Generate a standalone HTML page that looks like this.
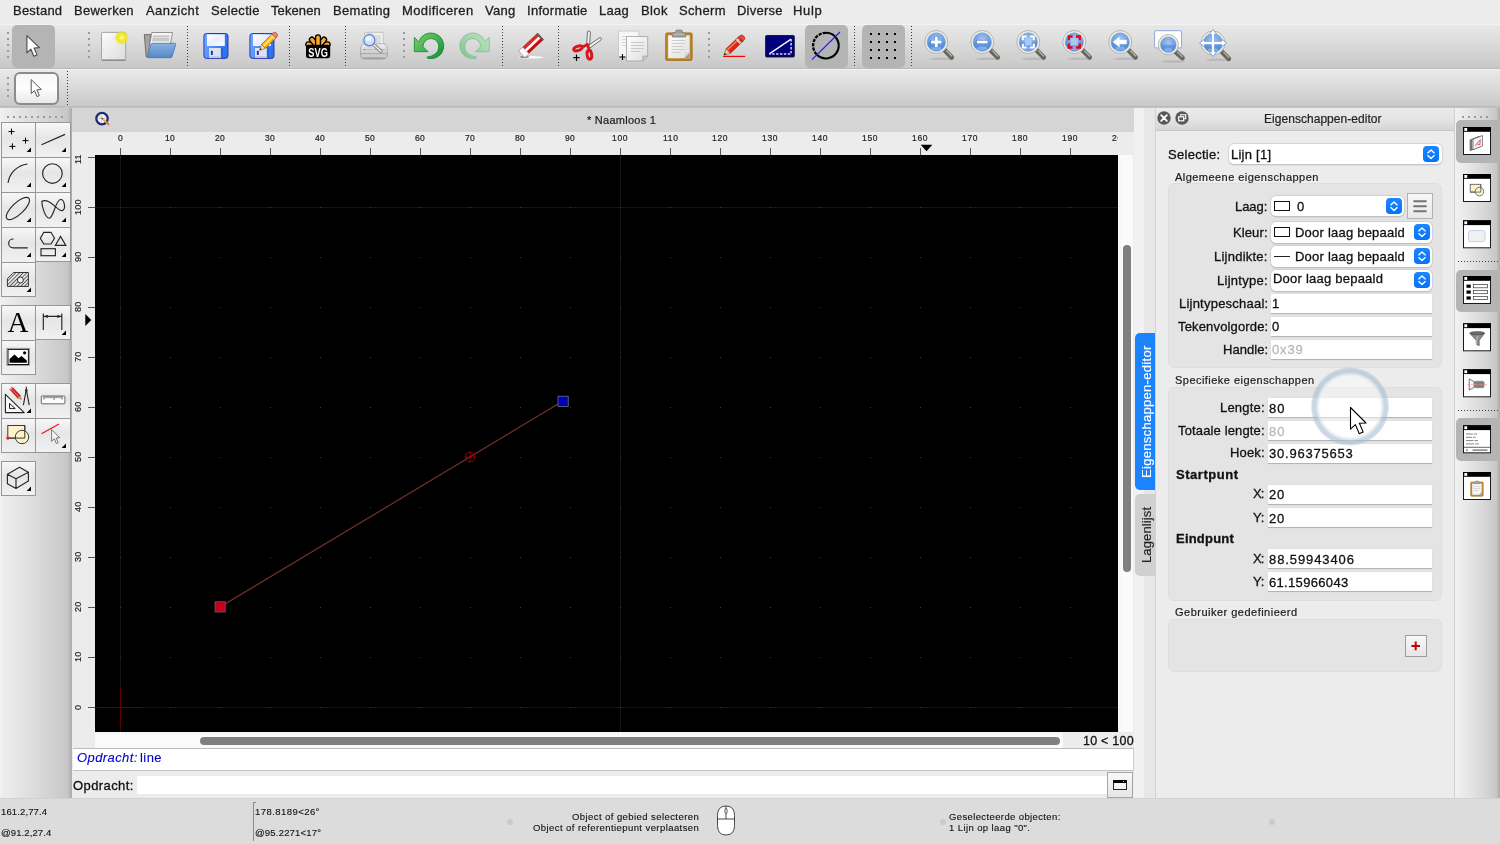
<!DOCTYPE html><html lang="nl"><head><meta charset="utf-8"><title>QCAD - Naamloos 1</title><style>
*{box-sizing:border-box;margin:0;padding:0}
html,body{width:1500px;height:844px;overflow:hidden}
body{position:relative;background:#ececec;font-family:"Liberation Sans",sans-serif;color:#1c1c1c}
.a{position:absolute}
.t{position:absolute;white-space:pre;will-change:transform;-webkit-text-stroke:0.3px}
.s{-webkit-text-stroke:0.12px}
.m{-webkit-text-stroke:0.2px}
svg{position:absolute;overflow:visible;will-change:transform}
#menubar{left:0;top:0;width:1500px;height:24px;background:#ececec}
#tb1{left:0;top:24px;width:1500px;height:45px;background:linear-gradient(#f3f3f3 0,#f3f3f3 1px,#e8e8e8 1px,#dfdfdf 14px,#c8c8c8 44px,#bbbbbb 44px)}
#tb2{left:0;top:69px;width:1500px;height:39px;background:linear-gradient(#f2f2f2 0,#f2f2f2 1px,#e9e9e9 1px,#e0e0e0 12px,#c9c9c9 37px,#bababa 37px,#bababa 38px,#c4c4c4 38px)}
.sel{background:#b4b4b4;border-radius:5px}
.hd{width:2px;height:2px;background:#9a9a9a}
.vsep{width:1px;background-image:linear-gradient(#3c3c3c 34%,transparent 34%);background-size:1px 3px}
.hsep{height:1px;background-image:linear-gradient(90deg,#3c3c3c 34%,transparent 34%);background-size:3px 1px}
#left{left:0;top:108px;width:72px;height:691px;background:linear-gradient(90deg,#f4f4f4 0,#eeeeee 2px,#dbdbdb 36px,#c7c7c7 68px,#b4b4b4 70px,#adadad 72px)}
.cb{width:34px;height:34px;border:1px solid #979797;background:linear-gradient(#f7f7f7,#e6e6e6 45%,#f1f1f1)}
#tabbar{left:72px;top:108px;width:1062px;height:24px;background:#d5d5d5}
#rtop{left:72px;top:132px;width:1062px;height:23px;background:#ececec}
#rleft{left:72px;top:155px;width:23px;height:593px;background:#ececec}
#canvas{left:95px;top:155px;width:1023px;height:577px;background:#000}
#vs{left:1118px;top:155px;width:15px;height:577px;background:linear-gradient(90deg,#f4f4f4,#fbfbfb 30%,#fafafa)}
#hs{left:95px;top:732px;width:968px;height:16px;background:linear-gradient(#f4f4f4,#fbfbfb 30%,#fafafa)}
.thumb{background:#7f7f7f;border-radius:4px}
#hist{left:73px;top:748px;width:1061px;height:23px;background:#fff;border-top:1px solid #bdbdbd;border-bottom:1px solid #c2c2c2;border-right:1px solid #cdcdcd}
#cmdin{left:137px;top:776px;width:970px;height:18px;background:#fff}
#status{left:0;top:798px;width:1500px;height:46px;background:#dcdcdc;border-top:1px solid #d2d2d2}
#tabcol{left:1134px;top:108px;width:21px;height:690px;background:linear-gradient(90deg,#f1f1f1 0,#f1f1f1 10px,#e7e7e7 10px)}
#dock{left:1155px;top:108px;width:300px;height:690px;background:#ececec;border-left:1px solid #d2d2d2;border-right:1px solid #cfcfcf}
#docktitle{left:1156px;top:108px;width:298px;height:23px;background:linear-gradient(#ebebeb,#e4e4e4 50%,#d6d6d6);border-bottom:1px solid #c6c6c6}
#rtb{left:1455px;top:108px;width:45px;height:690px;background:linear-gradient(90deg,#f1f1f1 0,#e7e7e7 13px,#d5d5d5 31px,#c6c6c6 42px,#b3b3b3 43px,#afafaf 45px)}
.gb{background:#e4e4e4;border:1px solid #dedede;border-radius:6px}
.combo{background:#fff;border-radius:5px;height:20.5px;box-shadow:0 0 0 0.5px #c3cbd6,0 0.5px 1.5px rgba(0,0,0,.25)}
.cbtn{width:16px;height:16px;border-radius:4px;background:linear-gradient(#1a86ff,#0773f5)}
.inp{background:#fff;height:19px;border-bottom:1px solid #b4b4b4;box-shadow:0 0 0 0.5px #dcdcdc}
.pbtn{border:1px solid #a6a6a6;background:linear-gradient(#f8f8f8,#e6e6e6)}
.dot{width:6px;height:6px;border-radius:3px;background:#cbcbcb}
</style></head><body>
<div id="menubar" class="a">
<span class="t" style="left:13.40px;top:2.00px;font-size:13px;line-height:18px;color:#1e1e1e;letter-spacing:0.233px;">Bestand</span>
<span class="t" style="left:74.40px;top:2.00px;font-size:13px;line-height:18px;color:#1e1e1e;letter-spacing:0.256px;">Bewerken</span>
<span class="t" style="left:145.90px;top:2.00px;font-size:13px;line-height:18px;color:#1e1e1e;letter-spacing:0.434px;">Aanzicht</span>
<span class="t" style="left:210.70px;top:2.00px;font-size:13px;line-height:18px;color:#1e1e1e;letter-spacing:0.322px;">Selectie</span>
<span class="t" style="left:271.10px;top:2.00px;font-size:13px;line-height:18px;color:#1e1e1e;letter-spacing:0.092px;">Tekenen</span>
<span class="t" style="left:332.70px;top:2.00px;font-size:13px;line-height:18px;color:#1e1e1e;letter-spacing:0.312px;">Bemating</span>
<span class="t" style="left:401.80px;top:2.00px;font-size:13px;line-height:18px;color:#1e1e1e;letter-spacing:0.391px;">Modificeren</span>
<span class="t" style="left:484.70px;top:2.00px;font-size:13px;line-height:18px;color:#1e1e1e;letter-spacing:0.269px;">Vang</span>
<span class="t" style="left:526.60px;top:2.00px;font-size:13px;line-height:18px;color:#1e1e1e;letter-spacing:0.278px;">Informatie</span>
<span class="t" style="left:598.70px;top:2.00px;font-size:13px;line-height:18px;color:#1e1e1e;letter-spacing:0.294px;">Laag</span>
<span class="t" style="left:640.70px;top:2.00px;font-size:13px;line-height:18px;color:#1e1e1e;letter-spacing:0.404px;">Blok</span>
<span class="t" style="left:678.70px;top:2.00px;font-size:13px;line-height:18px;color:#1e1e1e;letter-spacing:0.343px;">Scherm</span>
<span class="t" style="left:736.70px;top:2.00px;font-size:13px;line-height:18px;color:#1e1e1e;letter-spacing:0.223px;">Diverse</span>
<span class="t" style="left:793.40px;top:2.00px;font-size:13px;line-height:18px;color:#1e1e1e;letter-spacing:0.655px;">Hulp</span>
</div>
<div id="tb1" class="a"></div><div id="tb2" class="a"></div>
<div class="a sel" style="left:12px;top:25px;width:43px;height:43px"></div>
<div class="a sel" style="left:805px;top:25px;width:43px;height:43px"></div>
<div class="a sel" style="left:862px;top:25px;width:43px;height:43px"></div>
<div class="a hd" style="left:7px;top:32px"></div>
<div class="a hd" style="left:7px;top:38px"></div>
<div class="a hd" style="left:7px;top:44px"></div>
<div class="a hd" style="left:7px;top:50px"></div>
<div class="a hd" style="left:7px;top:56px"></div>
<div class="a hd" style="left:88px;top:32px"></div>
<div class="a hd" style="left:88px;top:38px"></div>
<div class="a hd" style="left:88px;top:44px"></div>
<div class="a hd" style="left:88px;top:50px"></div>
<div class="a hd" style="left:88px;top:56px"></div>
<div class="a hd" style="left:403px;top:32px"></div>
<div class="a hd" style="left:403px;top:38px"></div>
<div class="a hd" style="left:403px;top:44px"></div>
<div class="a hd" style="left:403px;top:50px"></div>
<div class="a hd" style="left:403px;top:56px"></div>
<div class="a hd" style="left:708px;top:32px"></div>
<div class="a hd" style="left:708px;top:38px"></div>
<div class="a hd" style="left:708px;top:44px"></div>
<div class="a hd" style="left:708px;top:50px"></div>
<div class="a hd" style="left:708px;top:56px"></div>
<div class="a vsep" style="left:187px;top:26px;height:40px"></div>
<div class="a vsep" style="left:289px;top:26px;height:40px"></div>
<div class="a vsep" style="left:345px;top:26px;height:40px"></div>
<div class="a vsep" style="left:502px;top:26px;height:40px"></div>
<div class="a vsep" style="left:558px;top:26px;height:40px"></div>
<div class="a vsep" style="left:854px;top:26px;height:40px"></div>
<div class="a vsep" style="left:911px;top:26px;height:40px"></div>
<div class="a hd" style="left:7px;top:77px"></div>
<div class="a hd" style="left:7px;top:83px"></div>
<div class="a hd" style="left:7px;top:89px"></div>
<div class="a hd" style="left:7px;top:95px"></div>
<div class="a vsep" style="left:67px;top:71px;height:34px"></div>
<div class="a" style="left:14px;top:72px;width:45px;height:33px;border:2px solid #8c8c8c;border-radius:6px;background:linear-gradient(#f6f6f6,#fdfdfd 50%,#e9e9e9)"></div>
<svg style="left:0;top:24px" width="1500" height="84" viewBox="0 24 1500 84"><defs>
<linearGradient id="gPage" x1="0" y1="0" x2="1" y2="1"><stop offset="0" stop-color="#fdfdfd"/><stop offset="1" stop-color="#dcdcdc"/></linearGradient>
<radialGradient id="gGlow"><stop offset="0" stop-color="#fffde0"/><stop offset=".3" stop-color="#f6f02a"/><stop offset=".72" stop-color="#eee41c" stop-opacity=".85"/><stop offset="1" stop-color="#e8dc20" stop-opacity="0"/></radialGradient>
<linearGradient id="gFold" x1="0" y1="0" x2="0" y2="1"><stop offset="0" stop-color="#8cb2de"/><stop offset="1" stop-color="#5588c8"/></linearGradient>
<linearGradient id="gFlop" x1="0" y1="0" x2="1" y2=".25"><stop offset="0" stop-color="#74acff"/><stop offset=".5" stop-color="#4a8cf8"/><stop offset="1" stop-color="#2c74ee"/></linearGradient>
<linearGradient id="gLabel" x1="0" y1="0" x2="1" y2="1"><stop offset="0" stop-color="#ffffff"/><stop offset=".5" stop-color="#eeeefc"/><stop offset="1" stop-color="#fbfbff"/></linearGradient>
<linearGradient id="gGreen" x1="0" y1="0" x2="1" y2="1"><stop offset="0" stop-color="#86cc6a"/><stop offset=".55" stop-color="#3fae52"/><stop offset="1" stop-color="#128a30"/></linearGradient>
<linearGradient id="gGreenL" x1="0" y1="0" x2="1" y2="1"><stop offset="0" stop-color="#bfe2bf"/><stop offset=".55" stop-color="#9fd3aa"/><stop offset="1" stop-color="#7cc08c"/></linearGradient>
<radialGradient id="gLens" cx=".5" cy=".35" r=".7"><stop offset="0" stop-color="#a9c6ee"/><stop offset=".6" stop-color="#6b9fe2"/><stop offset="1" stop-color="#4d86d4"/></radialGradient>
<linearGradient id="gPrint" x1="0" y1="0" x2="0" y2="1"><stop offset="0" stop-color="#f2f2f2"/><stop offset="1" stop-color="#bdbdbd"/></linearGradient>
<linearGradient id="gClip" x1="0" y1="0" x2="1" y2="1"><stop offset="0" stop-color="#ffffff"/><stop offset="1" stop-color="#dedede"/></linearGradient>
</defs><path d="M26.9 35.6V52.9L30.9 49.2L33.9 56.2L37 54.9L34.1 48L39.4 47.6Z" fill="#fff" stroke="#4a4a4a" stroke-width="1.1" stroke-linejoin="round"/><path d="M31.2 79.6V93.6L34.5 90.6L37 96.6L39.3 95.6L36.9 89.8L41.3 89.5Z" fill="#fff" stroke="#555" stroke-width="1" stroke-linejoin="round"/><rect x="101.500" y="32.400" width="24.200" height="27.500" rx="1.300" fill="url(#gPage)" stroke="#9c9c9c" stroke-width=".9"/><path d="M101.600 60.300h24" stroke="#7c7c7c" stroke-width="1.200" opacity=".8"/><path d="M103.400 42.200h1M103.400 49.600h1" stroke="#c4c4c4"/><circle cx="121.700" cy="37.700" r="7.200" fill="url(#gGlow)"/><path d="M144.300 34.600h6.400l-2.300 22h-2.300z" fill="#a4a4a4" stroke="#5a5a5a" stroke-width=".8" stroke-linejoin="round"/><path d="M151.800 32.500h20.800l-2.400 12-21.600 10.500-.8-.3z" fill="#f6f6f6" stroke="#7a7a7a" stroke-width=".8" stroke-linejoin="round"/><path d="M153.200 35.200h16.600l-.9 6.400h-17z" fill="#c9c9c9"/><path d="M153.600 37.400h15.800" stroke="#e4e4e4" stroke-width=".9"/><path d="M152.400 43.300h22.400q1.200 0 .9 1.200l-3.600 12q-.4 1.200-1.600 1.200h-22.400q-1.200 0-.8-1.200l3.500-12q.4-1.200 1.600-1.200z" fill="url(#gFold)" stroke="#3f74b6" stroke-width=".8"/><g transform="translate(203.4 33)"><rect x=".5" y=".5" width="24.100" height="24.900" rx="2.600" fill="url(#gFlop)" stroke="#2a2ab0" stroke-width=".9"/><rect x="3.600" y="1.300" width="17.800" height="11.700" fill="url(#gLabel)"/><rect x="17.400" y="15" width="2.200" height="9.900" fill="#1e5ee6" opacity=".8"/><rect x="5.600" y="15" width="11.800" height="10" fill="#dfe1ec"/><rect x="5.600" y="23.200" width="11.800" height="1.800" fill="#c4c6d8"/><rect x="7.500" y="17.700" width="1.900" height="4.300" rx=".6" fill="#0a32dc"/><rect x="22" y="3" width="1" height="1" fill="#2a4ab0"/></g><g transform="translate(249.4 33)"><rect x=".5" y=".5" width="24.100" height="24.900" rx="2.600" fill="url(#gFlop)" stroke="#2a2ab0" stroke-width=".9"/><rect x="3.600" y="1.300" width="17.800" height="11.700" fill="url(#gLabel)"/><rect x="17.400" y="15" width="2.200" height="9.900" fill="#1e5ee6" opacity=".8"/><rect x="5.600" y="15" width="11.800" height="10" fill="#dfe1ec"/><rect x="5.600" y="23.200" width="11.800" height="1.800" fill="#c4c6d8"/><rect x="7.500" y="17.700" width="1.900" height="4.300" rx=".6" fill="#0a32dc"/><rect x="22" y="3" width="1" height="1" fill="#2a4ab0"/></g><g transform="translate(259.600 50.300) rotate(-45.200)"><path d="M19.800 -2.800h1.500a2.800 2.800 0 0 1 0 5.600h-1.500z" fill="#f08a6a" stroke="#a02c10" stroke-width=".6"/><rect x="5.500" y="-2.800" width="14.500" height="5.600" fill="#ffb400" stroke="#a03410" stroke-width=".6"/><rect x="5.800" y="-1.100" width="14" height="1.900" fill="#ffe47a"/><rect x="17.800" y="-2.600" width="1.500" height="5.200" fill="#e4d8c0"/><path d="M0 0L5.500 -2.800V2.800Z" fill="#f2dcb4" stroke="#8a4a20" stroke-width=".5" stroke-linejoin="round"/><path d="M0 0L2.200 -1.120V1.120Z" fill="#2a2a2a"/></g><path d="M318 47L308.3 44.3" stroke="#000" stroke-width="6.200" stroke-linecap="round"/><path d="M318 47L308.3 44.3" stroke="#f8a92a" stroke-width="3.500" stroke-linecap="round"/><path d="M318 47L327.7 44.3" stroke="#000" stroke-width="6.200" stroke-linecap="round"/><path d="M318 47L327.7 44.3" stroke="#f8a92a" stroke-width="3.500" stroke-linecap="round"/><path d="M318 47L311.9 39.6" stroke="#000" stroke-width="6.200" stroke-linecap="round"/><path d="M318 47L311.9 39.6" stroke="#f8a92a" stroke-width="3.500" stroke-linecap="round"/><path d="M318 47L324.1 39.6" stroke="#000" stroke-width="6.200" stroke-linecap="round"/><path d="M318 47L324.1 39.6" stroke="#f8a92a" stroke-width="3.500" stroke-linecap="round"/><path d="M318 47L318 37.3" stroke="#000" stroke-width="6.200" stroke-linecap="round"/><path d="M318 47L318 37.3" stroke="#f8a92a" stroke-width="3.500" stroke-linecap="round"/><rect x="306" y="44.800" width="24.200" height="13.400" rx="2.600" fill="#000"/><text x="318.100" y="56.800" font-family="Liberation Sans,sans-serif" font-weight="bold" font-size="12.600" fill="#fff" text-anchor="middle" textLength="19.500" lengthAdjust="spacingAndGlyphs">SVG</text><path d="M364.500 32.400h18.800v14h-18.800z" fill="#f0f0f0" stroke="#bcbcbc" stroke-width=".8"/><path d="M371.500 35h9.300v8.500h-9.300z" fill="#dedede"/><path d="M360.600 48q0-3.600 3.400-4.200h19.800q3.400.6 3.400 4.200v7q0 2-2 2h-22.600q-2 0-2-2z" fill="url(#gPrint)" stroke="#a4a4a4" stroke-width=".8"/><path d="M363 49.500h22.500" stroke="#b4b4b4" stroke-width=".8"/><circle cx="364.300" cy="49.600" r=".7" fill="#777"/><path d="M360.600 53.600h26.600v2.400q0 2-2 2h-22.600q-2 0-2-2z" fill="#cdcdcd" stroke="#9c9c9c" stroke-width=".7"/><ellipse cx="374" cy="58.600" rx="12.500" ry="1.100" fill="#000" opacity=".16"/><path d="M373.600 44.600l7.400 6.800" stroke="#8c8c8c" stroke-width="3.600" stroke-linecap="round"/><path d="M374 45l7 6.400" stroke="#e6e6e6" stroke-width="1.600" stroke-linecap="round"/><circle cx="369.400" cy="40.300" r="7" fill="#f6f6f6" stroke="#b4b4b4" stroke-width=".5"/><circle cx="369.400" cy="40.300" r="5.600" fill="#cfdff6" stroke="#4a80d0" stroke-width="1.200"/><ellipse cx="368.600" cy="38.600" rx="3.400" ry="2.600" fill="#fff" opacity=".6"/><path d="M414.3 37.3V51.7H428L423 46.7A7.9 7.9 0 1 1 438.6 48.2Q437.4 55.4 427 57.1L427.6 58.3A12.9 12.9 0 1 0 418.7 41.7Z" fill="url(#gGreen)" stroke="#0f8a2f" stroke-width=".8" stroke-linejoin="round"/><path d="M414.3 37.3V51.7H428L423 46.7A7.9 7.9 0 1 1 438.6 48.2Q437.4 55.4 427 57.1L427.6 58.3A12.9 12.9 0 1 0 418.7 41.7Z" transform="translate(903.6 0) scale(-1 1)" fill="url(#gGreenL)" stroke="#7cc08e" stroke-width=".8" stroke-linejoin="round"/><ellipse cx="531" cy="57.300" rx="12.500" ry="1.300" fill="#fff" opacity=".85"/><ellipse cx="524.500" cy="57" rx="4.500" ry="1" fill="#3a2a2a" opacity=".55"/><g transform="rotate(-43.600 531.200 45.250)"><rect x="518.100" y="40.750" width="26.200" height="9" rx="1" fill="#c80c12"/><rect x="518.100" y="40.750" width="26.200" height="3.200" fill="#dc2a2a"/><rect x="523" y="43.900" width="21" height="2.700" fill="#fbfbfb"/><rect x="518.100" y="40.750" width="5.600" height="9" rx=".8" fill="#fafafa" stroke="#b8a8a8" stroke-width=".5"/><rect x="542.400" y="40.750" width="1.900" height="9" fill="#5c5c5c"/></g><path d="M586.600 45.200l.9-13.400c.2-1.200 2.800-1.200 2.900.3l-.9 14.100z" fill="#f4f4f4" stroke="#4a4a4a" stroke-width=".8" stroke-linejoin="round"/><path d="M588.200 45.600l11.600-8c1-.6 2.200 1.500 1.100 2.400l-11.600 8.400z" fill="#f4f4f4" stroke="#4a4a4a" stroke-width=".8" stroke-linejoin="round"/><ellipse cx="578" cy="48.400" rx="4.500" ry="2.200" transform="rotate(-20 578 48.400)" fill="none" stroke="#dc141c" stroke-width="2.900"/><ellipse cx="589.400" cy="54.800" rx="2.300" ry="4.500" transform="rotate(-8 589.400 54.800)" fill="none" stroke="#dc141c" stroke-width="2.900"/><path d="M583 46.800l4.600-2.400 1.500 5.600" fill="none" stroke="#dc141c" stroke-width="2.800" stroke-linejoin="round"/><path d="M573.300 57.700h6.400M576.500 54.500v6.400" stroke="#000" stroke-width="1.200"/><path d="M618.500 31h20.500v26h-20.500z" fill="#f6f6f6" stroke="#c4c4c4" stroke-width=".8"/><path d="M622 36.500h8M622 39.500h8M622 42.500h8M622 45.500h8" stroke="#d6d6d6"/><path d="M626.500 36.500h21.200v19.500l-5 5h-16.200z" fill="url(#gClip)" stroke="#a8a8a8" stroke-width=".9" stroke-linejoin="round"/><path d="M642.700 61v-5h5z" fill="#c9c9c9" stroke="#a0a0a0" stroke-width=".6" stroke-linejoin="round"/><path d="M631 42.500h13M631 45.500h13M631 48.500h13M631 51.500h9" stroke="#c9c9c9"/><path d="M619.500 57h6M622.500 54v6" stroke="#000" stroke-width="1.100"/><rect x="665.700" y="32.900" width="26.400" height="27.500" rx="1.400" fill="#bf8326" stroke="#9a6414" stroke-width=".8"/><path d="M668.200 35.400h21.400v22.700h-21.400z" fill="url(#gClip)" stroke="#e6e6e6" stroke-width=".3"/><path d="M684.200 58.100l5.400-5.400v5.400z" fill="#9c9c9c"/><path d="M684.200 58.100l5.400-5.400h-4.200z" fill="#d4d4d4"/><path d="M671.500 40.500h14M671.500 43.500h14M671.500 46.500h12M671.500 49.500h14M671.500 52.500h9" stroke="#cdcdcd"/><path d="M672.300 37v-3.300q0-1 1-1h2.400v-1.600q0-1 1-1h4.600q1 0 1 1v1.600h2.400q1 0 1 1v3.300z" fill="#a2a298" stroke="#77776e" stroke-width=".7"/><path d="M673.500 34.300h10.800" stroke="#c4c4bc" stroke-width=".9"/><path d="M723 56.400h22.200" stroke="#f00" stroke-width="1.200"/><g transform="translate(723.900 55.200) rotate(-43.700)"><path d="M23 -3.100h1.500a3.100 3.100 0 0 1 0 6.200h-1.500z" fill="#ec4a38" stroke="#7a3010" stroke-width=".6"/><rect x="6" y="-3.100" width="17.300" height="6.200" fill="#de2812" stroke="#7a3010" stroke-width=".6"/><rect x="6.300" y="-2.300" width="16.700" height="1.700" fill="#ff8262" opacity=".85"/><rect x="19.200" y="-2.900" width="2.100" height="5.800" fill="#d4d4d4"/><path d="M0 0L6 -3.100V3.100Z" fill="#ecc896" stroke="#7a4a20" stroke-width=".5" stroke-linejoin="round"/><path d="M0 0L2.400 -1.240V1.240Z" fill="#1c1c1c"/></g><rect x="765.600" y="35.500" width="28.700" height="21.500" rx="1" fill="#00007c" stroke="#10103a" stroke-width=".9"/><path d="M769.300 53.900l21.800-14.800" stroke="#fff" stroke-width="1.300"/><path d="M791.100 39.200v14.700h-21.800" fill="none" stroke="#d4d4f0" stroke-width="1.500" stroke-dasharray="2.400 1.500"/><path d="M816.500 54.300A12.800 12.800 0 1 0 826 32.800" fill="none" stroke="#000" stroke-width="2.100"/><path d="M826 32.800A12.800 12.800 0 0 0 816.500 54.300" fill="none" stroke="#000" stroke-width="2.300" stroke-dasharray="3.300 1.100"/><path d="M812 59.700L840 32" stroke="#1a1aff" stroke-width="1.100"/><rect x="870" y="33" width="2" height="2" fill="#000"/><rect x="870" y="41" width="2" height="2" fill="#000"/><rect x="870" y="49" width="2" height="2" fill="#000"/><rect x="870" y="57" width="2" height="2" fill="#000"/><rect x="878" y="33" width="2" height="2" fill="#000"/><rect x="878" y="41" width="2" height="2" fill="#000"/><rect x="878" y="49" width="2" height="2" fill="#000"/><rect x="878" y="57" width="2" height="2" fill="#000"/><rect x="886" y="33" width="2" height="2" fill="#000"/><rect x="886" y="41" width="2" height="2" fill="#000"/><rect x="886" y="49" width="2" height="2" fill="#000"/><rect x="886" y="57" width="2" height="2" fill="#000"/><rect x="894" y="33" width="2" height="2" fill="#000"/><rect x="894" y="41" width="2" height="2" fill="#000"/><rect x="894" y="49" width="2" height="2" fill="#000"/><rect x="894" y="57" width="2" height="2" fill="#000"/><ellipse cx="941.3" cy="58.8" rx="12" ry="1.300" fill="#000" opacity=".10"/><path d="M944.49 50.00l7.200 7.4" stroke="#66665f" stroke-width="4.800" stroke-linecap="round"/><path d="M946.69 50.80l5 5.2" stroke="#b4b4aa" stroke-width="1.300" stroke-linecap="round"/><circle cx="936.3" cy="42" r="11.5" fill="#efefe9" stroke="#a3a39a" stroke-width=".8"/><circle cx="936.3" cy="42" r="9.2" fill="url(#gLens)" stroke="#7f9fcf" stroke-width=".6"/><path d="M927.3999999999999 42.3a8.899999999999999 8.899999999999999 0 0 0 17.799999999999997 0z" fill="#4f88d8" opacity=".5"/><ellipse cx="936.3" cy="48.6" rx="5.06" ry="2" fill="#9cc4f4" opacity=".55"/><path d="M936.300 36.200v11.600M930.500 42h11.600" stroke="#4f7fc8" stroke-width="4.200"/><path d="M936.300 36.800v10.400M931.100 42h10.400" stroke="#fff" stroke-width="2.800"/><ellipse cx="987.3" cy="58.8" rx="12" ry="1.300" fill="#000" opacity=".10"/><path d="M990.49 50.00l7.200 7.4" stroke="#66665f" stroke-width="4.800" stroke-linecap="round"/><path d="M992.69 50.80l5 5.2" stroke="#b4b4aa" stroke-width="1.300" stroke-linecap="round"/><circle cx="982.3" cy="42" r="11.5" fill="#efefe9" stroke="#a3a39a" stroke-width=".8"/><circle cx="982.3" cy="42" r="9.2" fill="url(#gLens)" stroke="#7f9fcf" stroke-width=".6"/><path d="M973.3999999999999 42.3a8.899999999999999 8.899999999999999 0 0 0 17.799999999999997 0z" fill="#4f88d8" opacity=".5"/><ellipse cx="982.3" cy="48.6" rx="5.06" ry="2" fill="#9cc4f4" opacity=".55"/><path d="M976.300 42h12" stroke="#4f7fc8" stroke-width="4.200"/><path d="M976.900 42h10.800" stroke="#fff" stroke-width="2.800"/><ellipse cx="1033.3" cy="58.8" rx="12" ry="1.300" fill="#000" opacity=".10"/><path d="M1036.49 50.00l7.200 7.4" stroke="#66665f" stroke-width="4.800" stroke-linecap="round"/><path d="M1038.69 50.80l5 5.2" stroke="#b4b4aa" stroke-width="1.300" stroke-linecap="round"/><circle cx="1028.3" cy="42" r="11.5" fill="#efefe9" stroke="#a3a39a" stroke-width=".8"/><circle cx="1028.3" cy="42" r="9.2" fill="url(#gLens)" stroke="#7f9fcf" stroke-width=".6"/><path d="M1019.3999999999999 42.3a8.899999999999999 8.899999999999999 0 0 0 17.799999999999997 0z" fill="#4f88d8" opacity=".5"/><ellipse cx="1028.3" cy="48.6" rx="5.06" ry="2" fill="#9cc4f4" opacity=".55"/><rect x="1024.800" y="38.500" width="7" height="7" fill="#a8c8f0"/><path d="M1022.800 40.300v-3.800h3.800M1030 36.500h3.800v3.800M1033.800 43.700v3.800h-3.800M1026.600 47.500h-3.800v-3.800" fill="none" stroke="#fff" stroke-width="2.100"/><ellipse cx="1079.3" cy="58.8" rx="12" ry="1.300" fill="#000" opacity=".10"/><path d="M1082.49 50.00l7.200 7.4" stroke="#66665f" stroke-width="4.800" stroke-linecap="round"/><path d="M1084.69 50.80l5 5.2" stroke="#b4b4aa" stroke-width="1.300" stroke-linecap="round"/><circle cx="1074.3" cy="42" r="11.5" fill="#efefe9" stroke="#a3a39a" stroke-width=".8"/><circle cx="1074.3" cy="42" r="9.2" fill="url(#gLens)" stroke="#7f9fcf" stroke-width=".6"/><path d="M1065.3999999999999 42.3a8.899999999999999 8.899999999999999 0 0 0 17.799999999999997 0z" fill="#4f88d8" opacity=".5"/><ellipse cx="1074.3" cy="48.6" rx="5.06" ry="2" fill="#9cc4f4" opacity=".55"/><rect x="1070.800" y="38.500" width="7" height="7" fill="#a8c8f0"/><path d="M1068.800 40.300v-3.800h3.800M1076 36.500h3.800v3.800M1079.800 43.700v3.800h-3.800M1072.600 47.500h-3.800v-3.800" fill="none" stroke="#f00010" stroke-width="2.300"/><ellipse cx="1125.2" cy="58.8" rx="12" ry="1.300" fill="#000" opacity=".10"/><path d="M1128.39 50.00l7.200 7.4" stroke="#66665f" stroke-width="4.800" stroke-linecap="round"/><path d="M1130.59 50.80l5 5.2" stroke="#b4b4aa" stroke-width="1.300" stroke-linecap="round"/><circle cx="1120.2" cy="42" r="11.5" fill="#efefe9" stroke="#a3a39a" stroke-width=".8"/><circle cx="1120.2" cy="42" r="9.2" fill="url(#gLens)" stroke="#7f9fcf" stroke-width=".6"/><path d="M1111.3 42.3a8.899999999999999 8.899999999999999 0 0 0 17.799999999999997 0z" fill="#4f88d8" opacity=".5"/><ellipse cx="1120.2" cy="48.6" rx="5.06" ry="2" fill="#9cc4f4" opacity=".55"/><path d="M1113 42l6.400-5v3h7.200v4h-7.200v3z" fill="#fff" stroke="#e8eefa" stroke-width=".5" stroke-linejoin="round"/><rect x="1154.600" y="30.700" width="27" height="17.200" rx="1.400" fill="#fff" stroke="#7ea0d8" stroke-width=".9"/><ellipse cx="1173.3" cy="61.5" rx="12" ry="1.300" fill="#000" opacity=".10"/><path d="M1175.24 51.49l7.200 6.4" stroke="#66665f" stroke-width="4.800" stroke-linecap="round"/><path d="M1177.44 52.29l5 4.4" stroke="#b4b4aa" stroke-width="1.300" stroke-linecap="round"/><circle cx="1168.3" cy="44.7" r="10.1" fill="#efefe9" stroke="#a3a39a" stroke-width=".8"/><circle cx="1168.3" cy="44.7" r="7.8" fill="url(#gLens)" stroke="#7f9fcf" stroke-width=".6"/><path d="M1160.8 45.0a7.5 7.5 0 0 0 15.0 0z" fill="#4f88d8" opacity=".5"/><ellipse cx="1168.3" cy="49.9" rx="4.29" ry="2" fill="#9cc4f4" opacity=".55"/><ellipse cx="1218" cy="59.8" rx="12" ry="1.300" fill="#000" opacity=".10"/><path d="M1221.54 51.35l7.200 7.4" stroke="#66665f" stroke-width="4.800" stroke-linecap="round"/><path d="M1223.74 52.15l5 5.2" stroke="#b4b4aa" stroke-width="1.300" stroke-linecap="round"/><circle cx="1213" cy="43" r="11.899999999999999" fill="#efefe9" stroke="#a3a39a" stroke-width=".8"/><circle cx="1213" cy="43" r="9.6" fill="url(#gLens)" stroke="#7f9fcf" stroke-width=".6"/><path d="M1203.7 43.3a9.299999999999999 9.299999999999999 0 0 0 18.599999999999998 0z" fill="#4f88d8" opacity=".5"/><ellipse cx="1213" cy="50.0" rx="5.28" ry="2" fill="#9cc4f4" opacity=".55"/><path d="M1213 33v20M1203 43h20" stroke="#6a97de" stroke-width="3.400"/><path d="M1213 29.500l3.700 4.900h-7.400zM1213 56.500l3.700-4.900h-7.400zM1199.500 43l4.900-3.700v7.400zM1226.500 43l-4.900-3.700v7.400z" fill="#fff" stroke="#6a97de" stroke-width=".8" stroke-linejoin="round"/><path d="M1213 33.500v19M1203.500 43h19" stroke="#fff" stroke-width="2.300"/></svg>
<div id="left" class="a"></div>
<div class="a hd" style="left:7px;top:116px"></div>
<div class="a hd" style="left:13px;top:116px"></div>
<div class="a hd" style="left:19px;top:116px"></div>
<div class="a hd" style="left:25px;top:116px"></div>
<div class="a hd" style="left:31px;top:116px"></div>
<div class="a hd" style="left:37px;top:116px"></div>
<div class="a hd" style="left:43px;top:116px"></div>
<div class="a hd" style="left:49px;top:116px"></div>
<div class="a hd" style="left:55px;top:116px"></div>
<div class="a hd" style="left:61px;top:116px"></div>
<div class="a cb" style="left:1px;top:122px;width:35px;height:36px"></div>
<div class="a cb" style="left:35px;top:122px;width:36px;height:36px"></div>
<div class="a cb" style="left:1px;top:157px;width:35px;height:36px"></div>
<div class="a cb" style="left:35px;top:157px;width:36px;height:36px"></div>
<div class="a cb" style="left:1px;top:192px;width:35px;height:36px"></div>
<div class="a cb" style="left:35px;top:192px;width:36px;height:36px"></div>
<div class="a cb" style="left:1px;top:227px;width:35px;height:36px"></div>
<div class="a cb" style="left:35px;top:227px;width:36px;height:35px"></div>
<div class="a cb" style="left:1px;top:262px;width:35px;height:35px"></div>
<div class="a cb" style="left:1px;top:305px;width:35px;height:36px"></div>
<div class="a cb" style="left:35px;top:305px;width:36px;height:35px"></div>
<div class="a cb" style="left:1px;top:340px;width:35px;height:35px"></div>
<div class="a cb" style="left:1px;top:383px;width:35px;height:36px"></div>
<div class="a cb" style="left:35px;top:383px;width:36px;height:36px"></div>
<div class="a cb" style="left:1px;top:418px;width:35px;height:35px"></div>
<div class="a cb" style="left:35px;top:418px;width:36px;height:35px"></div>
<div class="a cb" style="left:1px;top:461px;width:35px;height:35px"></div>
<svg style="left:0;top:108px" width="72" height="400" viewBox="0 108 72 400"><defs><pattern id="hatch" width="2.6" height="2.6" patternUnits="userSpaceOnUse" patternTransform="rotate(-45)"><rect width="2.6" height="2.6" fill="#e8e8e8"/><path d="M0 1.3h2.6" stroke="#555" stroke-width=".9"/></pattern></defs><path d="M31 151.9v-4.4l-4.400 4.400z" fill="#000"/><path d="M66 151.9v-4.4l-4.400 4.400z" fill="#000"/><path d="M31 186.9v-4.4l-4.400 4.400z" fill="#000"/><path d="M66 186.9v-4.4l-4.400 4.400z" fill="#000"/><path d="M31 221.9v-4.4l-4.400 4.400z" fill="#000"/><path d="M66 221.9v-4.4l-4.400 4.400z" fill="#000"/><path d="M31 256.9v-4.4l-4.400 4.400z" fill="#000"/><path d="M66 256.9v-4.4l-4.400 4.400z" fill="#000"/><path d="M31 291.9v-4.4l-4.400 4.400z" fill="#000"/><path d="M66 334.9v-4.4l-4.400 4.400z" fill="#000"/><path d="M31 412.9v-4.4l-4.400 4.400z" fill="#000"/><path d="M66 447.9v-4.4l-4.400 4.400z" fill="#000"/><path d="M31 490.9v-4.4l-4.400 4.400z" fill="#000"/><path d="M8.500 131.600h6M11.500 128.600v6M22.500 140.600h6M25.500 137.600v6M9.400 146.400h6M12.400 143.400v6" stroke="#000" stroke-width="1"/><path d="M41.500 144.800L65 134.400" fill="none" stroke="#262626" stroke-width="1.15"/><path d="M8 183A22.200 22.200 0 0 1 27.500 164" fill="none" stroke="#262626" stroke-width="1.15"/><circle cx="52.400" cy="173.500" r="9.800" fill="none" stroke="#262626" stroke-width="1.15"/><ellipse cx="17.900" cy="208.500" rx="15" ry="5.800" transform="rotate(-43.500 17.900 208.500)" fill="none" stroke="#262626" stroke-width="1.15"/><path d="M41.800 201.300C41.800 207 45.500 218.200 49.300 218.200C53.500 218.200 55.500 200 60.500 199.500C64.500 199.200 66.500 210.200 62 210.600C57.500 211 49.500 197.500 41.800 201.300Z" fill="none" stroke="#262626" stroke-width="1.15"/><path d="M13.600 239A4.400 4.400 0 0 0 12.600 247.800H27.800" fill="none" stroke="#262626" stroke-width="1.15"/><path d="M40.300 238.200L43.800 232.300H51L54.500 238.200L51 244H43.800Z" fill="none" stroke="#262626" stroke-width="1.15"/><path d="M60.500 236.400L65.800 245.400H55.400Z" fill="none" stroke="#262626" stroke-width="1.15"/><rect x="41" y="248.700" width="14.400" height="7" fill="none" stroke="#262626" stroke-width="1.15"/><path d="M7.400 286.400V278.700L13.600 272.500H28.400V286.400Z" fill="url(#hatch)" stroke="#333" stroke-width="1"/><circle cx="20.400" cy="280" r="3" fill="#f4f4f4" stroke="#333" stroke-width="1"/><text x="18" y="332.300" font-family="Liberation Serif,serif" font-size="29" text-anchor="middle" fill="#000">A</text><path d="M43.300 313.600V330M61.800 313.600V330M43.300 316.400H61.800" fill="none" stroke="#262626" stroke-width="1.15"/><path d="M43.600 316.400l4.200-1.700v3.400zM61.500 316.400l-4.200-1.700v3.400z" fill="#262626"/><rect x="6.900" y="348.300" width="22.600" height="17.300" fill="#fff" stroke="#8a8a8a" stroke-width=".8"/><rect x="8" y="349.400" width="20.400" height="15.100" fill="#fff" stroke="#111" stroke-width="1"/><path d="M9.500 362.800V359L14.500 354.500L18.500 358.200L21.500 356L26.800 360.500V362.800Z" fill="#000"/><circle cx="24.600" cy="352.800" r="1.600" fill="#000"/><path d="M5.400 394.300V412.600H24.200Z" fill="#fafafa" stroke="#222" stroke-width="1.100" stroke-linejoin="round"/><path d="M9.500 403.400V408.600H15.300Z" fill="#f0f0f0" stroke="#222" stroke-width="1"/><path d="M9.600 389.200l2.700-2.300 8.300 9-2.700 2.400z" fill="#dc1c1c" stroke="#8a1010" stroke-width=".5"/><path d="M11 388.500l8.300 9" stroke="#ff8a7a" stroke-width=".8"/><path d="M17.900 398.300l2.700-2.400.9 3.400z" fill="#e8b878" stroke="#8a5a2a" stroke-width=".3"/><path d="M20.600 398.200l.9 1.100-1.400-.3z" fill="#222"/><path d="M9.600 389.200l1.300-1.100 1.400-1.200.7.800-2.700 2.300z" fill="#f4b0a0"/><path d="M26.300 386.800V390.500M26 391L23.400 405.200M26.600 391L29.200 405.200" stroke="#222" stroke-width="1.100" fill="none"/><circle cx="26.300" cy="390.400" r="1.400" fill="#333"/><rect x="41.300" y="396" width="23.600" height="7.800" rx=".8" fill="#fdfdfd" stroke="#5a5a5a" stroke-width=".9"/><path d="M44 396.400v3M46 396.400v1.800M48 396.400v1.800M50 396.400v1.800M52 396.400v1.800M54 396.400v3.400M56 396.400v1.800M58 396.400v1.800M60 396.400v1.800M62 396.400v3" stroke="#222" stroke-width=".8"/><rect x="7.800" y="425.500" width="17" height="12.600" fill="#fdf3c9" stroke="#3a3a3a" stroke-width="1"/><circle cx="22" cy="437" r="6.700" fill="#fdf3c9" stroke="#3a3a3a" stroke-width="1"/><path d="M7.800 438.100H24.800V425.500" fill="none" stroke="#3a3a3a" stroke-width="1"/><circle cx="7.800" cy="438.100" r="1.600" fill="#f01818"/><path d="M41.500 433.800L59 424" stroke="#f01818" stroke-width="1.300"/><path d="M51.600 429.500V441.300L54.300 438.700L56.400 443.600L58.200 442.800L56.100 438L59.700 437.700Z" fill="#f4f4f4" stroke="#6e6e6e" stroke-width=".9" stroke-linejoin="round"/><path d="M19.500 467.200L7.400 474.300L16 478.700L28.400 472.200ZM7.400 474.300V483.700L16 488.400L28.400 481V472.200M16 478.700V488.400" fill="none" stroke="#262626" stroke-width="1.15" stroke-linejoin="round"/></svg>
<div id="tabbar" class="a"></div><div id="rtop" class="a"></div><div id="rleft" class="a"></div>
<span class="t m" style="left:587.40px;top:113.00px;font-size:11px;line-height:15px;color:#1a1a1a;letter-spacing:0.261px;">* Naamloos 1</span>
<svg style="left:94px;top:111px" width="17" height="17" viewBox="94 111 17 17"><circle cx="102" cy="118.600" r="5.700" fill="#f4f4f6" stroke="#1f2c74" stroke-width="2.300"/><path d="M98 118.500h7.500M101.700 114.800v7.500M99 116l5.500 5" stroke="#c8a0a0" stroke-width=".6"/><path d="M102.500 118.600l5.600 5.200" stroke="#f0b020" stroke-width="1.800" stroke-linecap="round"/><path d="M107.200 123l1.300 1.300" stroke="#e86a5a" stroke-width="1.800" stroke-linecap="round"/><path d="M101.600 117.800l1.700.4-1.200 1.200z" fill="#333"/></svg>
<div id="canvas" class="a"></div>
<svg style="left:95px;top:155px;overflow:hidden" width="1023" height="577" viewBox="95 155 1023 577"><defs><pattern id="gd" x="120" y="207" width="50" height="50" patternUnits="userSpaceOnUse"><rect x="0" y="0" width="1" height="1" fill="#3a3a3a"/></pattern></defs><path d="M120.500 155V732M620.500 155V732M95 207.500H1118M95 707.500H1118" stroke="#141414" stroke-width="1"/><rect x="95" y="155" width="1023" height="577" fill="url(#gd)"/><path d="M99.500 707.500H140M120.500 686.500V727.500" stroke="#600000" stroke-width="1"/><path d="M220 607L563 401" stroke="#84352f" stroke-width="1.050"/><circle cx="470" cy="457" r="4.800" fill="none" stroke="#a00000" stroke-width="1"/><path d="M465 457h10M470 452v10" stroke="#a00000" stroke-width=".8"/><rect x="215" y="601.800" width="10.200" height="10.200" fill="#c1001f" stroke="#9a5060" stroke-width=".7"/><rect x="558" y="396.200" width="10.200" height="10.200" fill="#0000b4" stroke="#7a7a8a" stroke-width=".7"/></svg>
<div class="a" style="left:120px;top:148px;width:1px;height:7px;background:#555"></div>
<div class="a" style="left:170px;top:148px;width:1px;height:7px;background:#555"></div>
<div class="a" style="left:220px;top:148px;width:1px;height:7px;background:#555"></div>
<div class="a" style="left:270px;top:148px;width:1px;height:7px;background:#555"></div>
<div class="a" style="left:320px;top:148px;width:1px;height:7px;background:#555"></div>
<div class="a" style="left:370px;top:148px;width:1px;height:7px;background:#555"></div>
<div class="a" style="left:420px;top:148px;width:1px;height:7px;background:#555"></div>
<div class="a" style="left:470px;top:148px;width:1px;height:7px;background:#555"></div>
<div class="a" style="left:520px;top:148px;width:1px;height:7px;background:#555"></div>
<div class="a" style="left:570px;top:148px;width:1px;height:7px;background:#555"></div>
<div class="a" style="left:620px;top:148px;width:1px;height:7px;background:#555"></div>
<div class="a" style="left:670px;top:148px;width:1px;height:7px;background:#555"></div>
<div class="a" style="left:720px;top:148px;width:1px;height:7px;background:#555"></div>
<div class="a" style="left:770px;top:148px;width:1px;height:7px;background:#555"></div>
<div class="a" style="left:820px;top:148px;width:1px;height:7px;background:#555"></div>
<div class="a" style="left:870px;top:148px;width:1px;height:7px;background:#555"></div>
<div class="a" style="left:920px;top:148px;width:1px;height:7px;background:#555"></div>
<div class="a" style="left:970px;top:148px;width:1px;height:7px;background:#555"></div>
<div class="a" style="left:1020px;top:148px;width:1px;height:7px;background:#555"></div>
<div class="a" style="left:1070px;top:148px;width:1px;height:7px;background:#555"></div>
<div class="a" style="left:72px;top:132px;width:1046px;height:23px;overflow:hidden">
<span class="t m" style="left:45.79px;top:0.00px;font-size:8.5px;line-height:12px;color:#222;">0</span>
<span class="t m" style="left:93.37px;top:0.00px;font-size:8.5px;line-height:12px;color:#222;letter-spacing:0.200px;">10</span>
<span class="t m" style="left:143.37px;top:0.00px;font-size:8.5px;line-height:12px;color:#222;letter-spacing:0.200px;">20</span>
<span class="t m" style="left:193.37px;top:0.00px;font-size:8.5px;line-height:12px;color:#222;letter-spacing:0.200px;">30</span>
<span class="t m" style="left:243.37px;top:0.00px;font-size:8.5px;line-height:12px;color:#222;letter-spacing:0.200px;">40</span>
<span class="t m" style="left:293.37px;top:0.00px;font-size:8.5px;line-height:12px;color:#222;letter-spacing:0.200px;">50</span>
<span class="t m" style="left:343.37px;top:0.00px;font-size:8.5px;line-height:12px;color:#222;letter-spacing:0.200px;">60</span>
<span class="t m" style="left:393.37px;top:0.00px;font-size:8.5px;line-height:12px;color:#222;letter-spacing:0.200px;">70</span>
<span class="t m" style="left:443.37px;top:0.00px;font-size:8.5px;line-height:12px;color:#222;letter-spacing:0.200px;">80</span>
<span class="t m" style="left:493.37px;top:0.00px;font-size:8.5px;line-height:12px;color:#222;letter-spacing:0.200px;">90</span>
<span class="t m" style="left:540.36px;top:0.00px;font-size:8.5px;line-height:12px;color:#222;letter-spacing:0.700px;">100</span>
<span class="t m" style="left:590.68px;top:0.00px;font-size:8.5px;line-height:12px;color:#222;letter-spacing:0.700px;">110</span>
<span class="t m" style="left:640.36px;top:0.00px;font-size:8.5px;line-height:12px;color:#222;letter-spacing:0.700px;">120</span>
<span class="t m" style="left:690.36px;top:0.00px;font-size:8.5px;line-height:12px;color:#222;letter-spacing:0.700px;">130</span>
<span class="t m" style="left:740.36px;top:0.00px;font-size:8.5px;line-height:12px;color:#222;letter-spacing:0.700px;">140</span>
<span class="t m" style="left:790.36px;top:0.00px;font-size:8.5px;line-height:12px;color:#222;letter-spacing:0.700px;">150</span>
<span class="t m" style="left:840.36px;top:0.00px;font-size:8.5px;line-height:12px;color:#222;letter-spacing:0.700px;">160</span>
<span class="t m" style="left:890.36px;top:0.00px;font-size:8.5px;line-height:12px;color:#222;letter-spacing:0.700px;">170</span>
<span class="t m" style="left:940.36px;top:0.00px;font-size:8.5px;line-height:12px;color:#222;letter-spacing:0.700px;">180</span>
<span class="t m" style="left:990.36px;top:0.00px;font-size:8.5px;line-height:12px;color:#222;letter-spacing:0.700px;">190</span>
<span class="t m" style="left:1040.36px;top:0.00px;font-size:8.5px;line-height:12px;color:#222;letter-spacing:0.700px;">200</span>
</div>
<div class="a" style="left:72px;top:155px;width:23px;height:577px;overflow:hidden">
<div class="a" style="left:16px;top:552px;width:7px;height:1px;background:#555"></div>
<div class="a" style="left:9px;top:552.2px;width:0;height:0"><div class="a" style="transform:rotate(-90deg);transform-origin:0 0;left:0;top:0"><span class="t m" style="left:-2.58px;top:-8.82px;font-size:9px;line-height:13px;color:#222;">0</span></div></div>
<div class="a" style="left:16px;top:502px;width:7px;height:1px;background:#555"></div>
<div class="a" style="left:9px;top:502.2px;width:0;height:0"><div class="a" style="transform:rotate(-90deg);transform-origin:0 0;left:0;top:0"><span class="t m" style="left:-5.15px;top:-8.82px;font-size:9px;line-height:13px;color:#222;letter-spacing:0.300px;">10</span></div></div>
<div class="a" style="left:16px;top:452px;width:7px;height:1px;background:#555"></div>
<div class="a" style="left:9px;top:452.2px;width:0;height:0"><div class="a" style="transform:rotate(-90deg);transform-origin:0 0;left:0;top:0"><span class="t m" style="left:-5.15px;top:-8.82px;font-size:9px;line-height:13px;color:#222;letter-spacing:0.300px;">20</span></div></div>
<div class="a" style="left:16px;top:402px;width:7px;height:1px;background:#555"></div>
<div class="a" style="left:9px;top:402.2px;width:0;height:0"><div class="a" style="transform:rotate(-90deg);transform-origin:0 0;left:0;top:0"><span class="t m" style="left:-5.15px;top:-8.82px;font-size:9px;line-height:13px;color:#222;letter-spacing:0.300px;">30</span></div></div>
<div class="a" style="left:16px;top:352px;width:7px;height:1px;background:#555"></div>
<div class="a" style="left:9px;top:352.2px;width:0;height:0"><div class="a" style="transform:rotate(-90deg);transform-origin:0 0;left:0;top:0"><span class="t m" style="left:-5.15px;top:-8.82px;font-size:9px;line-height:13px;color:#222;letter-spacing:0.300px;">40</span></div></div>
<div class="a" style="left:16px;top:302px;width:7px;height:1px;background:#555"></div>
<div class="a" style="left:9px;top:302.2px;width:0;height:0"><div class="a" style="transform:rotate(-90deg);transform-origin:0 0;left:0;top:0"><span class="t m" style="left:-5.15px;top:-8.82px;font-size:9px;line-height:13px;color:#222;letter-spacing:0.300px;">50</span></div></div>
<div class="a" style="left:16px;top:252px;width:7px;height:1px;background:#555"></div>
<div class="a" style="left:9px;top:252.2px;width:0;height:0"><div class="a" style="transform:rotate(-90deg);transform-origin:0 0;left:0;top:0"><span class="t m" style="left:-5.15px;top:-8.82px;font-size:9px;line-height:13px;color:#222;letter-spacing:0.300px;">60</span></div></div>
<div class="a" style="left:16px;top:202px;width:7px;height:1px;background:#555"></div>
<div class="a" style="left:9px;top:202.2px;width:0;height:0"><div class="a" style="transform:rotate(-90deg);transform-origin:0 0;left:0;top:0"><span class="t m" style="left:-5.15px;top:-8.82px;font-size:9px;line-height:13px;color:#222;letter-spacing:0.300px;">70</span></div></div>
<div class="a" style="left:16px;top:152px;width:7px;height:1px;background:#555"></div>
<div class="a" style="left:9px;top:152.2px;width:0;height:0"><div class="a" style="transform:rotate(-90deg);transform-origin:0 0;left:0;top:0"><span class="t m" style="left:-5.15px;top:-8.82px;font-size:9px;line-height:13px;color:#222;letter-spacing:0.300px;">80</span></div></div>
<div class="a" style="left:16px;top:102px;width:7px;height:1px;background:#555"></div>
<div class="a" style="left:9px;top:102.2px;width:0;height:0"><div class="a" style="transform:rotate(-90deg);transform-origin:0 0;left:0;top:0"><span class="t m" style="left:-5.15px;top:-8.82px;font-size:9px;line-height:13px;color:#222;letter-spacing:0.300px;">90</span></div></div>
<div class="a" style="left:16px;top:52px;width:7px;height:1px;background:#555"></div>
<div class="a" style="left:9px;top:52.2px;width:0;height:0"><div class="a" style="transform:rotate(-90deg);transform-origin:0 0;left:0;top:0"><span class="t m" style="left:-7.73px;top:-8.82px;font-size:9px;line-height:13px;color:#222;letter-spacing:0.225px;">100</span></div></div>
<div class="a" style="left:16px;top:2px;width:7px;height:1px;background:#555"></div>
<div class="a" style="left:9px;top:2.2px;width:0;height:0"><div class="a" style="transform:rotate(-90deg);transform-origin:0 0;left:0;top:0"><span class="t m" style="left:-7.40px;top:-8.82px;font-size:9px;line-height:13px;color:#222;letter-spacing:0.225px;">110</span></div></div>
</div>
<svg style="left:0;top:0" width="1500" height="844"><path d="M920.7 144.8h11.6l-5.8 6.4zM85.3 314v12l6-6z" fill="#000"/></svg>
<div id="vs" class="a"></div><div id="hs" class="a"></div>
<div class="a thumb" style="left:1123px;top:245px;width:8px;height:326.5px"></div>
<div class="a thumb" style="left:199.5px;top:737px;width:860.5px;height:8px"></div>
<span class="t b" style="left:1082.90px;top:732.00px;font-size:12.5px;line-height:18px;color:#111;letter-spacing:0.228px;">10 &lt; 100</span>
<div id="hist" class="a"></div>
<span class="t s" style="left:76.70px;top:749.00px;font-size:13px;line-height:18px;color:#0000cd;letter-spacing:0.415px;font-style:italic;">Opdracht:</span>
<span class="t s" style="left:140.20px;top:749.00px;font-size:13px;line-height:18px;color:#0000cd;letter-spacing:0.455px;">line</span>
<span class="t" style="left:72.90px;top:777.00px;font-size:13px;line-height:18px;color:#111;letter-spacing:0.402px;">Opdracht:</span>
<div id="cmdin" class="a"></div>
<div class="a pbtn" style="left:1107px;top:772px;width:26px;height:26px"></div>
<svg style="left:1113px;top:780px" width="14" height="10"><rect x=".5" y=".5" width="13" height="9" fill="#f4f4f4" stroke="#222"/><rect x="0" y="0" width="14" height="3" fill="#000"/><rect x="10" y="1" width="1" height="1" fill="#ccc"/></svg>
<div id="status" class="a"></div>
<span class="t s" style="left:1.40px;top:805.00px;font-size:9.5px;line-height:13px;color:#111;letter-spacing:0.122px;">161.2,77.4</span>
<span class="t s" style="left:1.40px;top:826.00px;font-size:9.5px;line-height:13px;color:#111;letter-spacing:0.116px;">@91.2,27.4</span>
<div class="a" style="left:253px;top:802px;width:1px;height:39px;background:#8a8a8a"></div><div class="a" style="left:253px;top:802px;width:3px;height:1px;background:#8a8a8a"></div>
<span class="t s" style="left:255.40px;top:805.00px;font-size:9.5px;line-height:13px;color:#111;letter-spacing:0.443px;">178.8189&lt;26°</span>
<span class="t s" style="left:255.40px;top:826.00px;font-size:9.5px;line-height:13px;color:#111;letter-spacing:0.201px;">@95.2271&lt;17°</span>
<div class="a dot" style="left:506.5px;top:819px"></div>
<span class="t s" style="left:572.20px;top:810.00px;font-size:9.5px;line-height:13px;color:#111;letter-spacing:0.425px;">Object of gebied selecteren</span>
<span class="t s" style="left:533.10px;top:821.00px;font-size:9.5px;line-height:13px;color:#111;letter-spacing:0.422px;">Object of referentiepunt verplaatsen</span>
<svg style="left:716px;top:804px" width="20" height="33" viewBox="716 804 20 33"><path d="M717.500 815.500q0-9.500 8.500-9.500t8.500 9.500v10q0 9.500-8.500 9.500t-8.500-9.500z" fill="#fff" stroke="#333" stroke-width=".9"/><path d="M717.500 819h17M726 806v3M726 813v6" stroke="#333" stroke-width=".9" fill="none"/><rect x="725" y="808.500" width="2" height="5" rx="1" fill="#fff" stroke="#333" stroke-width=".8"/></svg>
<div class="a dot" style="left:940.3px;top:818.7px"></div>
<span class="t s" style="left:948.50px;top:810.00px;font-size:9.5px;line-height:13px;color:#111;letter-spacing:0.378px;">Geselecteerde objecten:</span>
<span class="t s" style="left:948.50px;top:821.00px;font-size:9.5px;line-height:13px;color:#111;letter-spacing:0.399px;">1 Lijn op laag "0".</span>
<div class="a dot" style="left:1269.2px;top:818.7px"></div>
<div id="tabcol" class="a"></div>
<div class="a" style="left:1135px;top:332.5px;width:20px;height:157.5px;background:#1b84fd;border-radius:5px 0 0 5px"></div>
<div class="a" style="left:1135px;top:494px;width:20px;height:81.5px;background:#d0d0d0;border-radius:5px 0 0 5px"></div>
<div class="a" style="left:1150.6px;top:477.8px;width:0;height:0"><div class="a" style="transform:rotate(-90deg);transform-origin:0 0;left:0;top:0"><span class="t m" style="left:0.00px;top:-12.70px;font-size:13px;line-height:18px;color:#fff;letter-spacing:0.307px;">Eigenschappen-editor</span></div></div>
<div class="a" style="left:1150.6px;top:562.8px;width:0;height:0"><div class="a" style="transform:rotate(-90deg);transform-origin:0 0;left:0;top:0"><span class="t m" style="left:0.00px;top:-12.70px;font-size:13px;line-height:18px;color:#222;letter-spacing:0.120px;">Lagenlijst</span></div></div>
<div id="dock" class="a"></div><div id="docktitle" class="a"></div>
<svg style="left:1156px;top:110px" width="36" height="18" viewBox="1156 110 36 18"><circle cx="1164" cy="118" r="6.700" fill="#585858"/><path d="M1161.200 115.200l5.600 5.600M1166.800 115.200l-5.600 5.600" stroke="#fff" stroke-width="1.900" stroke-linecap="round"/><circle cx="1182" cy="118" r="6.700" fill="#585858"/><path d="M1180.700 116.300v-1.600h5v4h-1.600" fill="none" stroke="#fff" stroke-width="1.100"/><rect x="1178.700" y="116.800" width="5" height="4" fill="none" stroke="#fff" stroke-width="1.200"/></svg>
<span class="t m" style="left:1263.70px;top:111.00px;font-size:12px;line-height:17px;color:#222;letter-spacing:0.040px;">Eigenschappen-editor</span>
<span class="t" style="left:1168.10px;top:146.00px;font-size:13px;line-height:18px;color:#111;letter-spacing:0.280px;">Selectie:</span>
<div class="a combo" style="left:1229px;top:143.5px;width:212.5px;height:20.5px"></div>
<div class="a cbtn" style="left:1423.0px;top:145.75px"></div>
<svg style="left:1423.0px;top:145.75px" width="16" height="16"><path d="M4.8 6.9L8 3.9l3.2 3M4.8 9.6L8 12.6l3.200-3" fill="none" stroke="#fff" stroke-width="1.35" stroke-linecap="round" stroke-linejoin="round"/></svg>
<span class="t" style="left:1231.00px;top:146.00px;font-size:13px;line-height:18px;color:#111;letter-spacing:0.243px;">Lijn [1]</span>
<span class="t m" style="left:1174.70px;top:170.00px;font-size:11px;line-height:15px;color:#1a1a1a;letter-spacing:0.454px;">Algemeene eigenschappen</span>
<div class="a gb" style="left:1168px;top:183px;width:273.5px;height:185px"></div>
<span class="t" style="left:1235.40px;top:198.00px;font-size:13px;line-height:18px;color:#111;letter-spacing:-0.057px;">Laag:</span>
<div class="a combo" style="left:1271px;top:195.7px;width:133.3px;height:20.5px"></div>
<div class="a cbtn" style="left:1385.8px;top:197.95px"></div>
<svg style="left:1385.8px;top:197.95px" width="16" height="16"><path d="M4.8 6.9L8 3.9l3.2 3M4.8 9.6L8 12.6l3.200-3" fill="none" stroke="#fff" stroke-width="1.35" stroke-linecap="round" stroke-linejoin="round"/></svg>
<div class="a" style="left:1274px;top:201.3px;width:16px;height:10px;border:1px solid #111;background:#fff"></div>
<span class="t" style="left:1296.60px;top:198.00px;font-size:13px;line-height:18px;color:#111;">0</span>
<div class="a pbtn" style="left:1407px;top:193px;width:26px;height:26px;border-color:#b2b2b2;background:linear-gradient(#f6f6f6,#e9e9e9)"></div>
<svg style="left:1413px;top:200px" width="14" height="12"><path d="M.4 1.2h13.200M.4 6.200h13.200M.4 11.200h13.200" stroke="#747474" stroke-width="1.9"/></svg>
<span class="t" style="left:1233.20px;top:224.00px;font-size:13px;line-height:18px;color:#111;letter-spacing:0.108px;">Kleur:</span>
<div class="a combo" style="left:1271px;top:222px;width:161px;height:20.5px"></div>
<div class="a cbtn" style="left:1413.5px;top:224.25px"></div>
<svg style="left:1413.5px;top:224.25px" width="16" height="16"><path d="M4.8 6.9L8 3.9l3.2 3M4.8 9.6L8 12.6l3.200-3" fill="none" stroke="#fff" stroke-width="1.35" stroke-linecap="round" stroke-linejoin="round"/></svg>
<div class="a" style="left:1274px;top:227.3px;width:16px;height:10px;border:1px solid #111;background:#fff"></div>
<span class="t" style="left:1295.00px;top:224.00px;font-size:13px;line-height:18px;color:#111;letter-spacing:0.223px;">Door laag bepaald</span>
<span class="t" style="left:1214.30px;top:248.00px;font-size:13px;line-height:18px;color:#111;letter-spacing:0.233px;">Lijndikte:</span>
<div class="a combo" style="left:1271px;top:246px;width:161px;height:20.5px"></div>
<div class="a cbtn" style="left:1413.5px;top:248.25px"></div>
<svg style="left:1413.5px;top:248.25px" width="16" height="16"><path d="M4.8 6.9L8 3.9l3.2 3M4.8 9.6L8 12.6l3.200-3" fill="none" stroke="#fff" stroke-width="1.35" stroke-linecap="round" stroke-linejoin="round"/></svg>
<div class="a" style="left:1274px;top:256px;width:16px;height:1px;background:#222"></div>
<span class="t" style="left:1295.00px;top:248.00px;font-size:13px;line-height:18px;color:#111;letter-spacing:0.223px;">Door laag bepaald</span>
<span class="t" style="left:1217.20px;top:272.00px;font-size:13px;line-height:18px;color:#111;letter-spacing:0.260px;">Lijntype:</span>
<div class="a combo" style="left:1271px;top:270px;width:161px;height:20.5px"></div>
<div class="a cbtn" style="left:1413.5px;top:272.25px"></div>
<svg style="left:1413.5px;top:272.25px" width="16" height="16"><path d="M4.8 6.9L8 3.9l3.2 3M4.8 9.6L8 12.6l3.200-3" fill="none" stroke="#fff" stroke-width="1.35" stroke-linecap="round" stroke-linejoin="round"/></svg>
<span class="t" style="left:1272.90px;top:270.00px;font-size:13px;line-height:18px;color:#111;letter-spacing:0.229px;">Door laag bepaald</span>
<div class="a inp" style="left:1271px;top:294px;width:161px;height:20px"></div>
<div class="a inp" style="left:1271px;top:317px;width:161px;height:20px"></div>
<div class="a inp" style="left:1271px;top:340px;width:161px;height:20px"></div>
<span class="t" style="left:1178.60px;top:295.00px;font-size:13px;line-height:18px;color:#111;letter-spacing:0.222px;">Lijntypeschaal:</span>
<span class="t" style="left:1272.00px;top:295.00px;font-size:13px;line-height:18px;color:#111;">1</span>
<span class="t" style="left:1177.50px;top:318.00px;font-size:13px;line-height:18px;color:#111;letter-spacing:0.157px;">Tekenvolgorde:</span>
<span class="t" style="left:1272.30px;top:318.00px;font-size:13px;line-height:18px;color:#111;">0</span>
<span class="t" style="left:1222.60px;top:341.00px;font-size:13px;line-height:18px;color:#111;letter-spacing:0.049px;">Handle:</span>
<span class="t" style="left:1271.70px;top:341.00px;font-size:13px;line-height:18px;color:#b9b9b9;letter-spacing:0.871px;">0x39</span>
<span class="t m" style="left:1174.70px;top:373.00px;font-size:11px;line-height:15px;color:#1a1a1a;letter-spacing:0.464px;">Specifieke eigenschappen</span>
<div class="a gb" style="left:1168px;top:387.3px;width:273.5px;height:213.4px"></div>
<div class="a inp" style="left:1268px;top:398px;width:164px;height:20px"></div>
<div class="a inp" style="left:1268px;top:421px;width:164px;height:20px"></div>
<div class="a inp" style="left:1268px;top:444px;width:164px;height:20px"></div>
<div class="a inp" style="left:1268px;top:485px;width:164px;height:20px"></div>
<div class="a inp" style="left:1268px;top:508px;width:164px;height:20px"></div>
<div class="a inp" style="left:1268px;top:549px;width:164px;height:20px"></div>
<div class="a inp" style="left:1268px;top:572px;width:164px;height:20px"></div>
<span class="t" style="left:1220.20px;top:399.00px;font-size:13px;line-height:18px;color:#111;letter-spacing:0.205px;">Lengte:</span>
<span class="t" style="left:1269.20px;top:400.00px;font-size:13px;line-height:18px;color:#111;letter-spacing:1.042px;">80</span>
<span class="t" style="left:1178.20px;top:422.00px;font-size:13px;line-height:18px;color:#111;letter-spacing:0.146px;">Totaale lengte:</span>
<span class="t" style="left:1269.20px;top:423.00px;font-size:13px;line-height:18px;color:#b9b9b9;letter-spacing:1.042px;">80</span>
<span class="t" style="left:1230.30px;top:444.00px;font-size:13px;line-height:18px;color:#111;letter-spacing:0.135px;">Hoek:</span>
<span class="t" style="left:1268.60px;top:445.00px;font-size:13px;line-height:18px;color:#111;letter-spacing:0.770px;">30.96375653</span>
<span class="t" style="left:1176.40px;top:466.00px;font-size:13px;line-height:18px;color:#111;letter-spacing:0.542px;font-weight:bold;">Startpunt</span>
<span class="t" style="left:1253.00px;top:485.00px;font-size:13px;line-height:18px;color:#111;letter-spacing:-0.883px;">X:</span>
<span class="t" style="left:1269.20px;top:486.00px;font-size:13px;line-height:18px;color:#111;letter-spacing:0.842px;">20</span>
<span class="t" style="left:1253.00px;top:509.00px;font-size:13px;line-height:18px;color:#111;letter-spacing:-0.166px;">Y:</span>
<span class="t" style="left:1269.20px;top:510.00px;font-size:13px;line-height:18px;color:#111;letter-spacing:0.842px;">20</span>
<span class="t" style="left:1176.40px;top:530.00px;font-size:13px;line-height:18px;color:#111;letter-spacing:0.213px;font-weight:bold;">Eindpunt</span>
<span class="t" style="left:1253.00px;top:550.00px;font-size:13px;line-height:18px;color:#111;letter-spacing:-0.883px;">X:</span>
<span class="t" style="left:1268.60px;top:551.00px;font-size:13px;line-height:18px;color:#111;letter-spacing:0.900px;">88.59943406</span>
<span class="t" style="left:1253.00px;top:573.00px;font-size:13px;line-height:18px;color:#111;letter-spacing:-0.166px;">Y:</span>
<span class="t" style="left:1268.60px;top:574.00px;font-size:13px;line-height:18px;color:#111;letter-spacing:0.330px;">61.15966043</span>
<span class="t m" style="left:1174.70px;top:605.00px;font-size:11px;line-height:15px;color:#1a1a1a;letter-spacing:0.486px;">Gebruiker gedefinieerd</span>
<div class="a gb" style="left:1168px;top:619px;width:273.5px;height:52.7px"></div>
<div class="a pbtn" style="left:1405.3px;top:635px;width:21.5px;height:21.7px;border-color:#9c9c9c"></div>
<svg style="left:1411px;top:641px" width="10" height="10"><path d="M4.7 0.6v8.6M0.4 4.9h8.6" stroke="#cc0000" stroke-width="2"/></svg>
<div id="rtb" class="a"></div>
<div class="a hd" style="left:1462px;top:116px"></div>
<div class="a hd" style="left:1468px;top:116px"></div>
<div class="a hd" style="left:1474px;top:116px"></div>
<div class="a hd" style="left:1480px;top:116px"></div>
<div class="a hd" style="left:1486px;top:116px"></div>
<div class="a sel" style="left:1456px;top:120px;width:48px;height:42.5px"></div>
<div class="a sel" style="left:1456px;top:269.5px;width:48px;height:42.5px"></div>
<div class="a sel" style="left:1456px;top:418px;width:48px;height:42.5px"></div>
<div class="a hsep" style="left:1458px;top:261px;width:42px"></div><div class="a hsep" style="left:1458px;top:410px;width:42px"></div>
<svg style="left:1455px;top:108px" width="45" height="420" viewBox="1455 108 45 420"><rect x="1463.500" y="127.5" width="27" height="27" fill="#fff" stroke="#1a1a1a" stroke-width="1"/><rect x="1463" y="127" width="28" height="4.800" fill="#000"/><rect x="1464.300" y="128" width="2.900" height="2.900" fill="#fff"/><rect x="1463.500" y="174.5" width="27" height="27" fill="#fff" stroke="#1a1a1a" stroke-width="1"/><rect x="1463" y="174" width="28" height="4.800" fill="#000"/><rect x="1464.300" y="175" width="2.900" height="2.900" fill="#fff"/><rect x="1463.500" y="220.8" width="27" height="27" fill="#fff" stroke="#1a1a1a" stroke-width="1"/><rect x="1463" y="220.3" width="28" height="4.800" fill="#000"/><rect x="1464.300" y="221.3" width="2.900" height="2.900" fill="#fff"/><rect x="1463.500" y="276.5" width="27" height="27" fill="#fff" stroke="#1a1a1a" stroke-width="1"/><rect x="1463" y="276" width="28" height="4.800" fill="#000"/><rect x="1464.300" y="277" width="2.900" height="2.900" fill="#fff"/><rect x="1463.500" y="323.8" width="27" height="27" fill="#fff" stroke="#1a1a1a" stroke-width="1"/><rect x="1463" y="323.3" width="28" height="4.800" fill="#000"/><rect x="1464.300" y="324.3" width="2.900" height="2.900" fill="#fff"/><rect x="1463.500" y="369.8" width="27" height="27" fill="#fff" stroke="#1a1a1a" stroke-width="1"/><rect x="1463" y="369.3" width="28" height="4.800" fill="#000"/><rect x="1464.300" y="370.3" width="2.900" height="2.900" fill="#fff"/><rect x="1463.500" y="425.8" width="27" height="27" fill="#fff" stroke="#1a1a1a" stroke-width="1"/><rect x="1463" y="425.3" width="28" height="4.800" fill="#000"/><rect x="1464.300" y="426.3" width="2.900" height="2.900" fill="#fff"/><rect x="1463.500" y="472.5" width="27" height="27" fill="#fff" stroke="#1a1a1a" stroke-width="1"/><rect x="1463" y="472" width="28" height="4.800" fill="#000"/><rect x="1464.300" y="473" width="2.900" height="2.900" fill="#fff"/><path d="M1470 140l9-3.500v10.500l-9 3.500z" fill="#9a9a9a" stroke="#444" stroke-width=".6"/><path d="M1471.500 139.6l9-3.500v10.500l-9 3.500z" fill="#d0d0d0" stroke="#444" stroke-width=".6"/><path d="M1473 139.2l9.500-3.700v10.500l-9.500 3.700z" fill="#f4f4f4" stroke="#444" stroke-width=".6"/><path d="M1475 146l5.300-6.300-.5 5.300M1477 144l3 .7" fill="none" stroke="#e83a3a" stroke-width=".8"/><rect x="1470.200" y="184.3" width="10.600" height="7.800" fill="#fdf3c9" stroke="#555" stroke-width=".8"/><circle cx="1479.500" cy="191.6" r="4.300" fill="#fdf3c9" stroke="#555" stroke-width=".8"/><path d="M1470.200 192.1h10.600v-7.800" fill="none" stroke="#555" stroke-width=".8"/><rect x="1468.500" y="230.60000000000002" width="16.500" height="11" rx="2.200" fill="#f1f1f1" stroke="#c3d0e6" stroke-width="1"/><rect x="1466.500" y="284.6" width="4.300" height="3.200" fill="#000"/><rect x="1473.300" y="284.6" width="14.300" height="3.200" fill="#fff" stroke="#333" stroke-width=".7"/><rect x="1466.500" y="290.5" width="4.300" height="3.200" fill="#000"/><rect x="1473.300" y="290.5" width="14.300" height="3.200" fill="#fff" stroke="#333" stroke-width=".7"/><rect x="1466.500" y="296.40000000000003" width="4.300" height="3.200" fill="#000"/><rect x="1473.300" y="296.40000000000003" width="14.300" height="3.200" fill="#fff" stroke="#333" stroke-width=".7"/><path d="M1469.800 333.3h14.800l-5.400 7v5.400l-3-1.400v-4z" fill="#8a8a8a" stroke="#4a4a4a" stroke-width=".6" stroke-linejoin="round"/><ellipse cx="1477.200" cy="333.2" rx="7.400" ry="1.700" fill="#6a6a6a" stroke="#444" stroke-width=".5"/><path d="M1478 335.3l-1.500 5.500v4" stroke="#d0d0d0" stroke-width=".8" fill="none"/><path d="M1469.200 378.90000000000003v11.200l5-2.700v-5.800z" fill="#f6f6f6" stroke="#444" stroke-width=".7"/><rect x="1474.200" y="381.3" width="10" height="6.400" rx="1.600" fill="#8e8e8e" stroke="#666" stroke-width=".5"/><path d="M1476 381.8v5.500M1478 381.8v5.500M1480 381.8v5.500M1482 381.8v5.500" stroke="#666" stroke-width=".6"/><path d="M1467.500 384.5h19.500" stroke="#f08a8a" stroke-width=".7" stroke-dasharray="3 1 1 1"/><path d="M1466 434.0h7M1474 434.0h3" stroke="#777" stroke-width=".9"/><path d="M1466 437.3h6M1473 437.3h2.5" stroke="#777" stroke-width=".9"/><path d="M1466 440.6h7.5M1474.5 440.6h3.5" stroke="#777" stroke-width=".9"/><path d="M1466 443.9h8M1475 443.9h4" stroke="#777" stroke-width=".9"/><path d="M1463.500 447.3h27" stroke="#222" stroke-width=".7"/><path d="M1466 450.1h1.800M1472.500 450.1h15" stroke="#444" stroke-width="1"/><rect x="1470.700" y="482" width="12.500" height="14.200" rx=".8" fill="#c48a3c" stroke="#a06c22" stroke-width=".6"/><rect x="1472.200" y="483.6" width="9.500" height="11.200" fill="#f4f4f4"/><path d="M1474 483.6v-1.600h1.600v-1h2.800v1h1.600v1.600z" fill="#a6a69c" stroke="#7f7f76" stroke-width=".4"/><path d="M1473.700 486.5h6.500M1473.700 488.5h6.500M1473.700 490.5h5" stroke="#cfcfcf" stroke-width=".7"/><path d="M1479 494.8l2.700-2.700v2.700z" fill="#9a9a9a"/></svg>
<svg style="left:1300px;top:360px" width="100" height="100" viewBox="1300 360 100 100"><defs><radialGradient id="ring" cx="1350" cy="406.600" r="39.500" gradientUnits="userSpaceOnUse"><stop offset="0" stop-color="#fff" stop-opacity=".42"/><stop offset=".75" stop-color="#fff" stop-opacity=".42"/><stop offset=".81" stop-color="#e2e9f2" stop-opacity=".7"/><stop offset=".88" stop-color="#a6bbd1" stop-opacity=".62"/><stop offset=".955" stop-color="#a6bbd1" stop-opacity=".55"/><stop offset="1" stop-color="#a6bbd1" stop-opacity="0"/></radialGradient></defs><circle cx="1350" cy="406.600" r="39.500" fill="url(#ring)"/><path d="M1350.500 407.500V429.200L1355.400 424.600L1359.300 433.800L1363.200 432.100L1359.400 423.200L1366 423Z" fill="#fff" stroke="#000" stroke-width="1.100" stroke-linejoin="round"/></svg>
</body></html>
